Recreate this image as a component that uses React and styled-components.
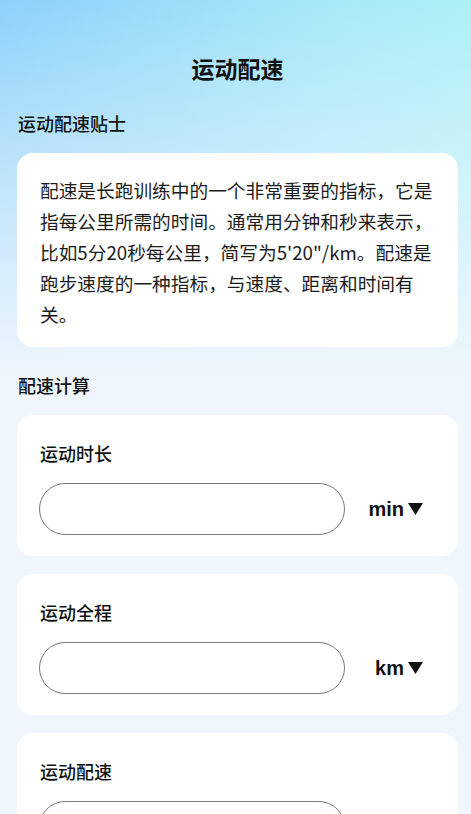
import React, { useState } from 'react';
import styled, { createGlobalStyle } from 'styled-components';

const GlobalStyle = createGlobalStyle`
  html, body {
    margin: 0;
    padding: 0;
    background: #eff6fd;
  }
  body {
    font-family: "Noto Sans CJK SC", "Noto Sans", sans-serif;
    color: #1a1a1a;
  }
  * { box-sizing: border-box; }
`;

const Page = styled.div`
  min-height: 814px;
  padding: 53px 13px 40px 17px;
  background:
    linear-gradient(180deg, rgba(239, 246, 253, 0) 0px, rgba(239, 246, 253, 0.5) 180px, #eff6fd 380px),
    linear-gradient(100deg, #8dd1fa 0%, #a9e9f8 55%, #b3f7f4 100%);
  background-repeat: no-repeat;
`;

const Title = styled.h1`
  margin: 0;
  text-align: center;
  font-size: 23px;
  line-height: 30px;
  font-weight: 700;
  color: #111;
`;

const SectionTitle = styled.h2`
  margin: ${p => p.$top}px 0 17px 1px;
  font-size: 18px;
  line-height: 26px;
  font-weight: 500;
  color: #111;
`;

const Card = styled.div`
  background: #fff;
  border-radius: 16px;
  padding: ${p => (p.$tip ? '21px 23px 18px' : '25px 23px 21px')};
  & + & {
    margin-top: 18px;
  }
`;

const TipText = styled.p`
  margin: 0;
  font-size: 18.7px;
  line-height: 31px;
  color: #1c1c1c;
`;

const Label = styled.div`
  font-size: 18px;
  line-height: 26px;
  font-weight: 500;
  color: #111;
`;

const Row = styled.div`
  margin-top: 17px;
  display: flex;
  align-items: center;
`;

const Input = styled.input`
  flex: 0 0 306px;
  height: 52px;
  margin-left: -1px;
  border: 1px solid #7a7a7a;
  border-radius: 26px;
  padding: 0 20px;
  font-size: 18px;
  font-family: inherit;
  background: #fff;
  outline: none;
`;

const Unit = styled.div`
  flex: 1;
  display: flex;
  justify-content: flex-end;
  align-items: center;
  gap: 4px;
  padding-right: 12px;
  font-family: "Liberation Sans", "Noto Sans", sans-serif;
  font-size: 20px;
  font-weight: 700;
  color: #111;
  cursor: pointer;
`;

const Caret = () => (
  <svg width="15" height="12" viewBox="0 0 15 12">
    <polygon points="0,0 15,0 7.5,12" fill="#111" />
  </svg>
);

const fields = [
  { label: '运动时长', unit: 'min' },
  { label: '运动全程', unit: 'km' },
  { label: '运动配速', unit: 'min/km' },
];

const App = () => {
  const [values, setValues] = useState({});

  return (
    <Page>
      <GlobalStyle />
      <Title>运动配速</Title>
      <SectionTitle $top={27}>运动配速贴士</SectionTitle>
      <Card $tip>
        <TipText>
          配速是长跑训练中的一个非常重要的指标，它是指每公里所需的时间。通常用分钟和秒来表示，比如5分20秒每公里，简写为5'20"/km。配速是跑步速度的一种指标，与速度、距离和时间有关。
        </TipText>
      </Card>
      <SectionTitle $top={25}>配速计算</SectionTitle>
      {fields.map((f, i) => (
        <Card key={i}>
          <Label>{f.label}</Label>
          <Row>
            <Input
              value={values[i] || ''}
              onChange={e => setValues({ ...values, [i]: e.target.value })}
            />
            <Unit>
              {f.unit}
              <Caret />
            </Unit>
          </Row>
        </Card>
      ))}
    </Page>
  );
};

export default App;
